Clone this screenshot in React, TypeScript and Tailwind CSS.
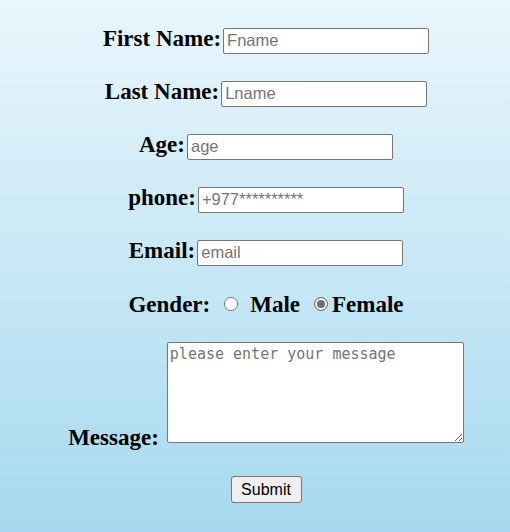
import { useState } from "react";

const labelCls =
  "font-['Liberation_Serif',serif] font-bold text-[23px] leading-none text-black whitespace-nowrap";
const inputCls =
  "w-[206px] h-[26px] px-[3px] bg-white border border-[#767676] rounded-[2px] font-['Liberation_Sans',Arial,sans-serif] text-[16.5px] text-black placeholder:text-[#757575] outline-none";
const radioCls =
  "w-[14px] h-[14px] appearance-none rounded-full border border-[#767676] bg-white checked:bg-[#6e6e6e] checked:shadow-[inset_0_0_0_2px_white]";

function Field({
  label,
  placeholder,
  type = "text",
}: {
  label: string;
  placeholder: string;
  type?: string;
}) {
  return (
    <div className="h-[53px] flex items-center justify-center pl-[22px]">
      <div className="flex items-baseline gap-[2px]">
        <label className={labelCls}>{label}</label>
        <input type={type} placeholder={placeholder} className={inputCls} />
      </div>
    </div>
  );
}

export default function App() {
  const [gender, setGender] = useState("female");

  return (
    <div className="min-h-screen bg-gradient-to-b from-[#e9f6fc] to-[#a6d9ef] pt-[14px]">
      <form onSubmit={(e) => e.preventDefault()} className="flex flex-col">
        <Field label="First Name:" placeholder="Fname" />
        <Field label="Last Name:" placeholder="Lname" />
        <Field label="Age:" placeholder="age" type="number" />
        <Field label="phone:" placeholder="+977**********" type="tel" />
        <Field label="Email:" placeholder="email" type="email" />

        {/* Gender */}
        <div className="h-[50px] flex items-center justify-center pl-[22px]">
          <span className={labelCls}>Gender:</span>
          <input
            type="radio"
            name="gender"
            checked={gender === "male"}
            onChange={() => setGender("male")}
            className={radioCls + " ml-[14px]"}
          />
          <span className={labelCls + " ml-[12px]"}>Male</span>
          <input
            type="radio"
            name="gender"
            checked={gender === "female"}
            onChange={() => setGender("female")}
            className={radioCls + " ml-[14px]"}
          />
          <span className={labelCls + " ml-[4px]"}>Female</span>
        </div>

        {/* Message */}
        <div className="mt-[13px] flex items-end justify-center pl-[22px]">
          <label className={labelCls + " mb-[-6px]"}>Message:</label>
          <textarea
            placeholder="please enter your message"
            className="ml-[8px] w-[297px] h-[101px] p-[2px] bg-white border border-[#767676] rounded-[2px] font-['DejaVu_Sans_Mono',monospace] text-[15px] leading-[18px] placeholder:text-[#757575] outline-none"
          />
        </div>

        <div className="mt-[33px] flex justify-center pl-[22px]">
          <button
            type="submit"
            className="w-[71px] h-[27px] bg-[#efefef] border border-[#767676] rounded-[3px] font-['Liberation_Sans',Arial,sans-serif] text-[16px] text-black"
          >
            Submit
          </button>
        </div>
      </form>
    </div>
  );
}
